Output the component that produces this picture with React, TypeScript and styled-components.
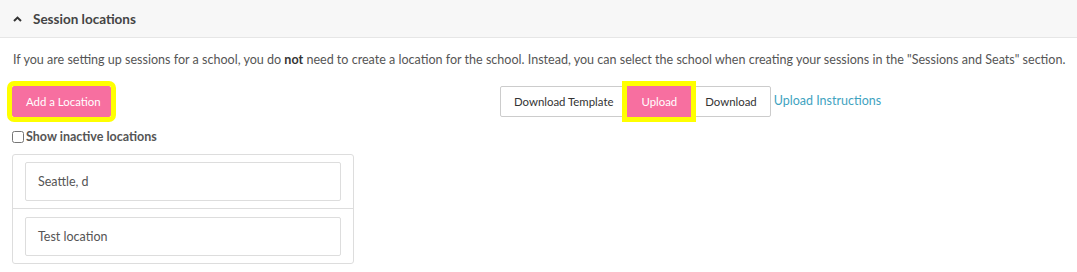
import React from "react";
import styled, { createGlobalStyle } from "styled-components";

const Global = createGlobalStyle`
  html, body { margin: 0; padding: 0; background: #fff; }
  body { font-family: Lato, "Open Sans", sans-serif; color: #555; }
  * { box-sizing: border-box; }
`;

const Header = styled.div`
  height: 38px;
  background: #f7f7f7;
  border-bottom: 1px solid #e6e6e6;
  display: flex;
  align-items: center;
  padding-left: 13px;
  gap: 11px;
`;

const HeaderTitle = styled.span`
  font-size: 13.5px;
  font-weight: 700;
  color: #444;
`;

const Body = styled.div`
  padding: 13px 12px 0 12px;
`;

const Intro = styled.p`
  margin: 0;
  font-size: 12.55px;
  line-height: 18px;
  color: #555;
  padding-left: 1px;
  white-space: nowrap;
  b { color: #333; font-weight: 700; }
`;

const ButtonRow = styled.div`
  display: grid;
  grid-template-columns: 488px auto;
  align-items: center;
  margin-top: 17px;
`;

const Btn = styled.button<{ $primary?: boolean; $highlight?: boolean }>`
  height: 31px;
  font-family: Lato, sans-serif;
  font-size: 11.4px;
  padding: 0 13px;
  white-space: nowrap;
  border: 1px solid ${(p) => (p.$primary ? "#f76fa0" : "#ccc")};
  background: ${(p) => (p.$primary ? "#f76fa0" : "#fff")};
  color: ${(p) => (p.$primary ? "#fff" : "#333")};
  border-radius: 2px;
  cursor: pointer;
  outline: ${(p) => (p.$highlight ? "5px solid #ffff00" : "none")};
  outline-offset: 0;
  position: relative;
  z-index: ${(p) => (p.$highlight ? 1 : 0)};
`;

const AddBtn = styled(Btn)`
  width: 99px;
  justify-self: start;
`;

const Toolbar = styled.div`
  display: flex;
  align-items: center;
`;

const Group = styled.div`
  display: flex;
  ${Btn} { border-radius: 0; }
  ${Btn}:first-child { border-radius: 2px 0 0 2px; }
  ${Btn}:last-child { border-radius: 0 2px 2px 0; }
`;

const LinkText = styled.a`
  margin-left: 3px;
  font-size: 12.5px;
  color: #3fa3bf;
  text-decoration: none;
  margin-top: -3px;
`;

const CheckRow = styled.label`
  display: flex;
  align-items: center;
  gap: 2px;
  margin-top: 12px;
  font-size: 12.5px;
  font-weight: 700;
  color: #555;
`;

const Check = styled.input`
  margin: 0;
  width: 12px;
  height: 12px;
`;

const List = styled.div`
  margin-top: 10px;
  width: 342px;
  border: 1px solid #ddd;
  border-radius: 3px;
`;

const Item = styled.div`
  padding: 7px 12px;
  border-bottom: 1px solid #ddd;
  &:last-child { border-bottom: none; padding-top: 8px; }
`;

const ItemBox = styled.div`
  height: 39px;
  border: 1px solid #ddd;
  border-radius: 2px;
  display: flex;
  align-items: center;
  padding-left: 12px;
  font-size: 12.5px;
  color: #555;
`;

const Chevron = () => (
  <svg width="9" height="6" viewBox="0 0 9 6">
    <path d="M1 5 L4.5 1.6 L8 5" fill="none" stroke="#333" strokeWidth="2" />
  </svg>
);

export default function App() {
  return (
    <>
      <Global />
      <Header>
        <Chevron />
        <HeaderTitle>Session locations</HeaderTitle>
      </Header>
      <Body>
        <Intro>
          If you are setting up sessions for a school, you do <b>not</b> need to create a location for the school. Instead, you can select the school when creating your sessions in the "Sessions and Seats" section.
        </Intro>
        <ButtonRow>
          <AddBtn $primary $highlight>Add a Location</AddBtn>
          <Toolbar>
            <Group>
              <Btn>Download Template</Btn>
              <Btn $primary $highlight>Upload</Btn>
              <Btn>Download</Btn>
            </Group>
            <LinkText href="#">Upload Instructions</LinkText>
          </Toolbar>
        </ButtonRow>
        <CheckRow>
          <Check type="checkbox" />
          Show inactive locations
        </CheckRow>
        <List>
          <Item><ItemBox>Seattle, d</ItemBox></Item>
          <Item><ItemBox>Test location</ItemBox></Item>
        </List>
      </Body>
    </>
  );
}
